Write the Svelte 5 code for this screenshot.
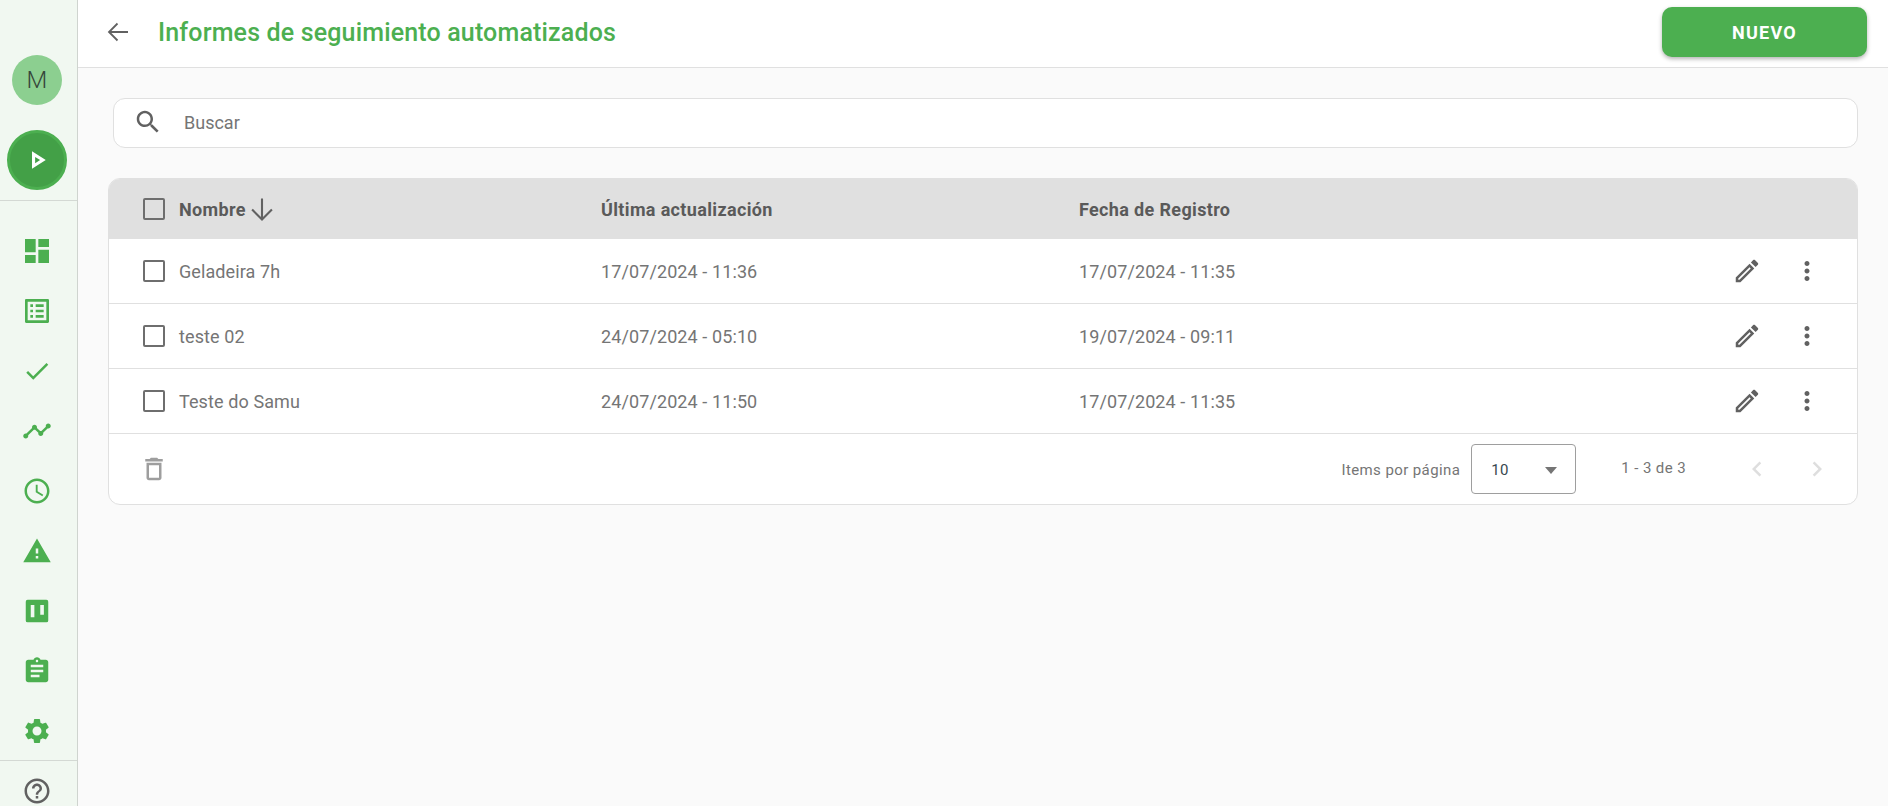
<script>
    const navIcons = [
        { name: 'dashboard', size: 32, d: 'M3 13h8V3H3v10zm0 8h8v-6H3v6zm10 0h8V11h-8v10zm0-18v6h8V3h-8z' },
        { name: 'list', size: 32, d: 'M19 5v14H5V5h14m1.1-2H3.9c-.5 0-.9.4-.9.9v16.2c0 .4.4.9.9.9h16.2c.4 0 .9-.5.9-.9V3.9c0-.5-.5-.9-.9-.9zM11 7h6v2h-6V7zm0 4h6v2h-6v-2zm0 4h6v2h-6zM7 7h2v2H7zm0 4h2v2H7zm0 4h2v2H7z' },
        { name: 'check', size: 30, d: 'M9 16.17L4.83 12l-1.42 1.41L9 19 21 7l-1.41-1.41z' },
        { name: 'timeline', size: 30, d: 'M23 8c0 1.1-.9 2-2 2-.18 0-.35-.02-.51-.07l-3.56 3.55c.05.16.07.34.07.52 0 1.1-.9 2-2 2s-2-.9-2-2c0-.18.02-.36.07-.52l-2.55-2.55c-.16.05-.34.07-.52.07s-.36-.02-.52-.07l-4.55 4.56c.05.16.07.33.07.51 0 1.1-.9 2-2 2s-2-.9-2-2 .9-2 2-2c.18 0 .35.02.51.07l4.56-4.55C8.02 9.36 8 9.18 8 9c0-1.1.9-2 2-2s2 .9 2 2c0 .18-.02.36-.07.52l2.55 2.55c.16-.05.34-.07.52-.07s.36.02.52.07l3.55-3.56C19.02 8.35 19 8.18 19 8c0-1.1.9-2 2-2s2 .9 2 2z' },
        { name: 'schedule', size: 30, d: 'M11.99 2C6.47 2 2 6.48 2 12s4.47 10 9.99 10C17.52 22 22 17.52 22 12S17.52 2 11.99 2zM12 20c-4.42 0-8-3.58-8-8s3.58-8 8-8 8 3.58 8 8-3.58 8-8 8zm.5-13H11v6l5.25 3.15.75-1.23-4.5-2.67z' },
        { name: 'warning', size: 30, d: 'M1 21h22L12 2 1 21zm12-3h-2v-2h2v2zm0-4h-2v-4h2v4z' },
        { name: 'board', size: 30, d: 'M19.5 3h-15A1.500 1.500 0 0 0 3 4.500v15A1.500 1.500 0 0 0 4.500 21h15a1.500 1.500 0 0 0 1.500-1.500v-15A1.500 1.500 0 0 0 19.500 3zM9.900 17H7V7.200h2.900zm7.600-2H14.600V7.200h2.900z' },
        { name: 'assignment', size: 30, d: 'M19 3h-4.18C14.4 1.84 13.3 1 12 1c-1.3 0-2.4.84-2.82 2H5c-1.1 0-2 .9-2 2v14c0 1.1.9 2 2 2h14c1.1 0 2-.9 2-2V5c0-1.1-.9-2-2-2zm-7 0c.55 0 1 .45 1 1s-.45 1-1 1-1-.45-1-1 .45-1 1-1zm2 14H7v-2h7v2zm3-4H7v-2h10v2zm0-4H7V7h10v2z' },
        { name: 'settings', size: 30, d: 'M19.14 12.94c.04-.3.06-.61.06-.94 0-.32-.02-.64-.07-.94l2.03-1.58c.18-.14.23-.41.12-.61l-1.92-3.32c-.12-.22-.37-.29-.59-.22l-2.39.96c-.5-.38-1.03-.7-1.62-.94l-.36-2.54c-.04-.24-.24-.41-.48-.41h-3.84c-.24 0-.43.17-.47.41l-.36 2.54c-.59.24-1.13.57-1.62.94l-2.39-.96c-.22-.08-.47 0-.59.22L2.74 8.87c-.12.21-.08.47.12.61l2.03 1.58c-.05.3-.09.63-.09.94s.02.64.07.94l-2.03 1.58c-.18.14-.23.41-.12.61l1.92 3.32c.12.22.37.29.59.22l2.39-.96c.5.38 1.03.7 1.62.94l.36 2.54c.05.24.24.41.48.41h3.84c.24 0 .44-.17.47-.41l.36-2.54c.59-.24 1.13-.56 1.62-.94l2.39.96c.22.08.47 0 .59-.22l1.92-3.32c.12-.22.07-.47-.12-.61l-2.01-1.58zM12 15.6c-1.98 0-3.6-1.62-3.6-3.6s1.62-3.6 3.6-3.6 3.6 1.62 3.6 3.6-1.62 3.6-3.6 3.6z' }
    ];

    const rows = [
        { name: 'Geladeira 7h', updated: '17/07/2024 - 11:36', created: '17/07/2024 - 11:35' },
        { name: 'teste 02', updated: '24/07/2024 - 05:10', created: '19/07/2024 - 09:11' },
        { name: 'Teste do Samu', updated: '24/07/2024 - 11:50', created: '17/07/2024 - 11:35' }
    ];
</script>

<div class="page">
    <aside class="sidebar">
        <div class="avatar">M</div>
        <div class="play">
            <svg width="30" height="30" viewBox="0 0 24 24"><path fill-rule="evenodd" d="M8 5v14l11-7L8 5zM10.500 9.500v5l4-2.500z" /></svg>
        </div>
        <nav class="nav">
            {#each navIcons as icon}
                <div class="nav-item">
                    <svg width={icon.size} height={icon.size} viewBox="0 0 24 24"><path fill-rule={icon.name === 'board' ? 'evenodd' : 'nonzero'} d={icon.d} /></svg>
                </div>
            {/each}
        </nav>
        <div class="help">
            <svg width="30" height="30" viewBox="0 0 24 24"><path d="M11 18h2v-2h-2v2zm1-16C6.48 2 2 6.48 2 12s4.48 10 10 10 10-4.48 10-10S17.52 2 12 2zm0 18c-4.41 0-8-3.59-8-8s3.59-8 8-8 8 3.59 8 8-3.59 8-8 8zm0-14c-2.21 0-4 1.79-4 4h2c0-1.1.9-2 2-2s2 .9 2 2c0 2-3 1.75-3 5h2c0-2.25 3-2.5 3-5 0-2.21-1.79-4-4-4z" /></svg>
        </div>
    </aside>

    <main class="main">
        <header class="topbar">
            <svg class="back" width="24" height="24" viewBox="0 0 24 24"><path d="M22 12H3M11.5 3.5L3 12l8.500 8.500" /></svg>
            <h1>Informes de seguimiento automatizados</h1>
            <button class="new">NUEVO</button>
        </header>

        <section class="content">
            <div class="search">
                <svg width="30" height="30" viewBox="0 0 24 24"><path d="M15.5 14h-.79l-.28-.27C15.41 12.59 16 11.11 16 9.5 16 5.91 13.09 3 9.500 3S3 5.910 3 9.500 5.910 16 9.500 16c1.610 0 3.090-.59 4.230-1.570l.27.28v.79l5 4.990L20.490 19l-4.990-5zm-6 0C7.010 14 5 11.990 5 9.500S7.010 5 9.500 5 14 7.010 14 9.500 11.990 14 9.500 14z" /></svg>
                <span>Buscar</span>
            </div>

            <div class="table">
                <div class="row head">
                    <span class="box"></span>
                    <span class="name">Nombre
                        <svg width="28" height="28" viewBox="0 0 24 24"><path d="M12 3v18M3.500 12.500L12 21l8.500-8.500" /></svg>
                    </span>
                    <span>Última actualización</span>
                    <span>Fecha de Registro</span>
                </div>
                {#each rows as row}
                    <div class="row">
                        <span class="box"></span>
                        <span class="name">{row.name}</span>
                        <span>{row.updated}</span>
                        <span>{row.created}</span>
                        <div class="actions">
                            <svg width="30" height="30" viewBox="0 0 24 24"><path d="M14.060 9.020l.92.92L5.920 19H5v-.92l9.060-9.060M17.660 3c-.25 0-.51.1-.7.29l-1.830 1.830 3.750 3.750 1.830-1.830c.39-.39.39-1.020 0-1.410l-2.340-2.340c-.2-.2-.45-.29-.71-.29zm-3.600 3.190L3 17.250V21h3.750L17.810 9.940l-3.750-3.750z" /></svg>
                            <svg width="30" height="30" viewBox="0 0 24 24"><path d="M12 8c1.100 0 2-.9 2-2s-.9-2-2-2-2 .9-2 2 .9 2 2 2zm0 2c-1.100 0-2 .9-2 2s.9 2 2 2 2-.9 2-2-.9-2-2-2zm0 6c-1.100 0-2 .9-2 2s.9 2 2 2 2-.9 2-2-.9-2-2-2z" /></svg>
                        </div>
                    </div>
                {/each}
                <div class="foot">
                    <svg class="trash" width="30" height="30" viewBox="0 0 24 24"><path d="M6 19c0 1.100.9 2 2 2h8c1.100 0 2-.9 2-2V7H6v12zM8 9h8v10H8V9zm7.500-5l-1-1h-5l-1 1H5v2h14V4z" /></svg>
                    <span class="per-page">Items por página</span>
                    <div class="select">
                        <span>10</span>
                        <i class="caret"></i>
                    </div>
                    <span class="range">1 - 3 de 3</span>
                    <svg class="chev" width="30" height="30" viewBox="0 0 24 24"><path d="M15.410 7.410L14 6l-6 6 6 6 1.410-1.410L10.830 12z" /></svg>
                    <svg class="chev" width="30" height="30" viewBox="0 0 24 24"><path d="M10 6L8.590 7.410 13.170 12l-4.580 4.590L10 18l6-6z" /></svg>
                </div>
            </div>
        </section>
    </main>
</div>

<style>
    :global(body) {
        margin: 0;
        background: #fafafa;
        font-family: Roboto, "Liberation Sans", sans-serif;
    }

    svg {
        display: block;
        flex: none;
        fill: #616161;
    }

    .page {
        display: flex;
        height: 806px;
        overflow: hidden;
    }

    .sidebar {
        width: 78px;
        flex: none;
        display: flex;
        flex-direction: column;
        align-items: center;
        background: #f1f8f1;
        border-right: 1px solid #cfd4cf;
        padding-top: 55px;
        box-sizing: border-box;
    }

    .sidebar > * {
        flex: none;
    }

    .avatar {
        width: 50px;
        height: 50px;
        margin-right: 3px;
        border-radius: 50%;
        background: #8ccf90;
        color: #36463a;
        font-size: 24px;
        font-weight: 300;
        display: flex;
        align-items: center;
        justify-content: center;
    }

    .play {
        width: 60px;
        height: 60px;
        box-sizing: border-box;
        margin: 25px 3px 0 0;
        border-radius: 50%;
        background: #43a047;
        border: 3px solid #4caf50;
        display: flex;
        align-items: center;
        justify-content: center;
    }

    .play svg {
        fill: #fff;
    }

    .nav {
        align-self: stretch;
        margin-top: 10px;
        padding-top: 20px;
        border-top: 1px solid #d4d9d4;
    }

    .nav-item {
        height: 60px;
        padding-right: 3px;
        display: flex;
        align-items: center;
        justify-content: center;
    }

    .nav-item svg {
        fill: #4caf50;
    }

    .help {
        align-self: stretch;
        margin-top: -1px;
        padding-right: 3px;
        height: 60px;
        border-top: 1px solid #d4d9d4;
        display: flex;
        align-items: center;
        justify-content: center;
    }

    .main {
        flex: 1;
        min-width: 0;
    }

    .topbar {
        height: 64px;
        background: #fff;
        border-bottom: 1px solid #e0e0e0;
        display: flex;
        align-items: center;
        padding: 0 21px 3px 28px;
    }

    .back {
        fill: none;
        stroke: #616161;
        stroke-width: 1.8;
    }

    h1 {
        margin: 0 0 0 28px;
        font-size: 25px;
        font-weight: 500;
        letter-spacing: 0.16px;
        color: #4caf50;
        flex: 1;
    }

    .new {
        width: 205px;
        height: 50px;
        border: 0;
        border-radius: 10px;
        background: #4caf50;
        color: #fff;
        font: 700 18px Roboto, sans-serif;
        letter-spacing: 1.25px;
        box-shadow: 0 2px 4px rgba(0, 0, 0, 0.3);
    }

    .content {
        padding: 30px 30px 0;
    }

    .search {
        height: 50px;
        margin-left: 5px;
        box-sizing: border-box;
        background: #fff;
        border: 1px solid #e0e0e0;
        border-radius: 12px;
        display: flex;
        align-items: center;
        padding: 0 0 2px 19px;
        gap: 21px;
        color: #757575;
        font-size: 18px;
    }

    .table {
        margin-top: 30px;
        background: #fff;
        border: 1px solid #e0e0e0;
        border-radius: 12px;
        overflow: hidden;
    }

    .row {
        height: 64px;
        border-bottom: 1px solid #e0e0e0;
        display: grid;
        grid-template-columns: 36px 422px 478px 1fr auto;
        align-items: center;
        padding-left: 34px;
        color: #757575;
        font-size: 18px;
        letter-spacing: 0.1px;
    }

    .row.head {
        height: 60px;
        background: #e0e0e0;
        border-bottom: 0;
        color: #5a5a5a;
        font-weight: 700;
        letter-spacing: 0.35px;
    }

    .box {
        width: 22px;
        height: 22px;
        box-sizing: border-box;
        border: 2px solid #6e6e6e;
        border-radius: 2px;
    }

    .name {
        display: flex;
        align-items: center;
        gap: 2px;
    }

    .head .name svg {
        fill: none;
        stroke: #616161;
        stroke-width: 1.8;
    }

    .actions {
        display: flex;
        gap: 30px;
        padding-right: 35px;
    }

    .foot {
        height: 70px;
        display: flex;
        align-items: center;
        padding-left: 30px;
        font-size: 15px;
        letter-spacing: 0.4px;
        color: #757575;
    }

    .trash {
        fill: #9e9e9e;
        margin-right: auto;
    }

    .per-page {
        padding-top: 2px;
    }

    .select {
        width: 105px;
        height: 50px;
        box-sizing: border-box;
        margin-left: 11px;
        border: 1px solid #9e9e9e;
        border-radius: 4px;
        display: flex;
        align-items: center;
        justify-content: space-between;
        padding: 2px 18px 0 19px;
        color: #37474f;
    }

    .caret {
        width: 0;
        height: 0;
        border-left: 6.5px solid transparent;
        border-right: 6.5px solid transparent;
        border-top: 7px solid #757575;
    }

    .range {
        margin: 0 56px 3px 45px;
    }

    .chev {
        fill: #dedede;
        margin-right: 30px;
    }

    .chev:last-child {
        margin-right: 25px;
    }
</style>
